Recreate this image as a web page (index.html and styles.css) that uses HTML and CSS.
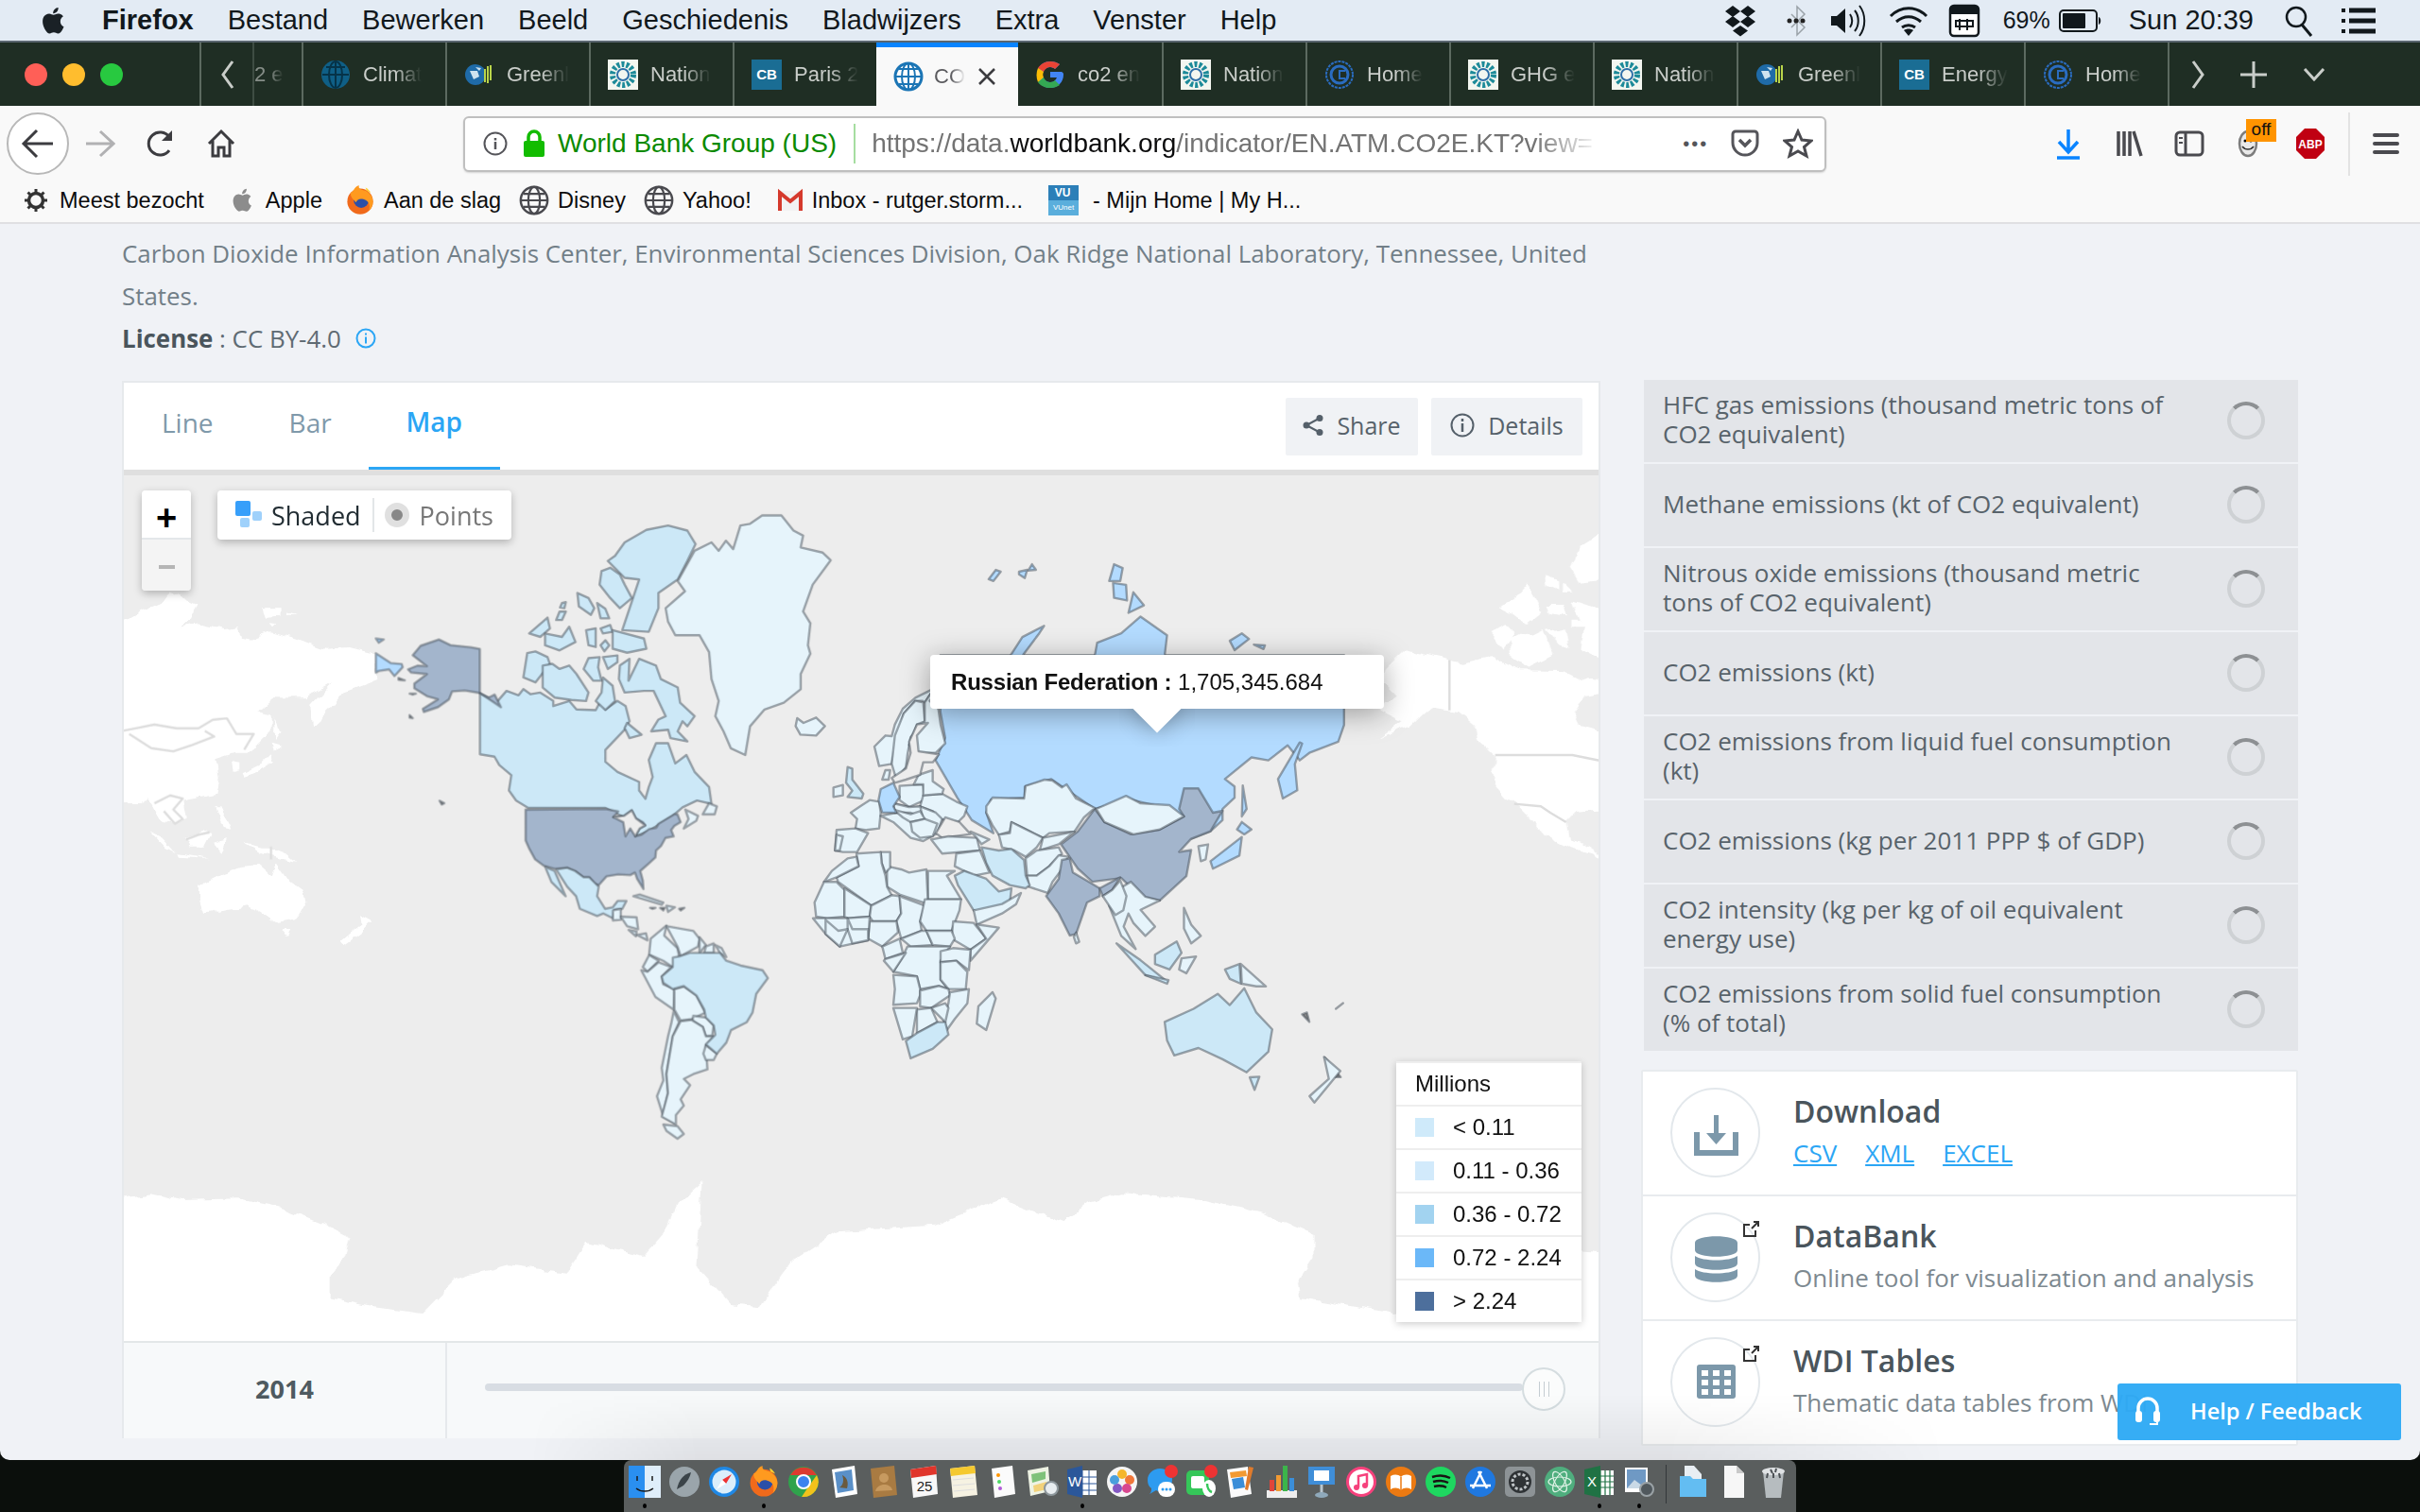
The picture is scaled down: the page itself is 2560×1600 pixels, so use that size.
FILE: index.html
```html
<!DOCTYPE html>
<html>
  <head>
    <title>CO2 emissions | Data</title>
    <meta charset="UTF-8" />
    <link rel="stylesheet" href="styles.css">
  </head>
  <body>
    <svg class="sprites" width="0" height="0">
      <defs>
        <symbol id="fav-wb" viewBox="0 0 32 32">
          <circle cx="16" cy="16" r="14" fill="#fff" stroke="#1b75b5" stroke-width="3"/>
          <path d="M16 2v28M2 16h28M6 8h20M6 24h20" stroke="#1b75b5" stroke-width="2" fill="none"/>
          <ellipse cx="16" cy="16" rx="7" ry="14" fill="none" stroke="#1b75b5" stroke-width="2"/>
        </symbol>
        <symbol id="fav-wb-dark" viewBox="0 0 32 32">
          <circle cx="16" cy="16" r="15" fill="#0f5f86"/>
          <path d="M16 2v28M2 16h28M6 8h20" stroke="#063348" stroke-width="2" fill="none"/>
          <ellipse cx="16" cy="16" rx="7" ry="14" fill="none" stroke="#063348" stroke-width="2"/>
        </symbol>
        <symbol id="fav-ghg" viewBox="0 0 32 32">
          <circle cx="12" cy="16" r="11" fill="#1f6ba8"/>
          <path d="M6 12h8l2 6-6 3zM12 8l6 1-2 3z" fill="#cfe3ef"/>
          <path d="M25 7v18M28 6v16M22 10v14" stroke="#b9d44a" stroke-width="2"/>
        </symbol>
        <symbol id="fav-noaa" viewBox="0 0 32 32">
          <rect width="32" height="32" fill="#f3f6f0"/>
          <circle cx="16" cy="16" r="11" fill="none" stroke="#1c8a99" stroke-width="6" stroke-dasharray="3 2"/>
          <circle cx="16" cy="16" r="6" fill="none" stroke="#2d6fa8" stroke-width="2"/>
        </symbol>
        <symbol id="fav-cb" viewBox="0 0 32 32">
          <rect width="32" height="32" fill="#1a6d94"/>
          <text x="16" y="21" text-anchor="middle" class="fav-cb-text">CB</text>
        </symbol>
        <symbol id="fav-g" viewBox="0 0 32 32">
          <path d="M28 13H16v6h7c-1 3-4 5-7 5-5 0-8-4-8-8s3-8 8-8c2 0 4 1 5 2l5-5c-3-2-6-3-10-3C8 2 2 8 2 16s6 14 14 14c8 0 14-6 14-14 0-1 0-2-2-3z" fill="#4285f4"/>
          <path d="M3 9l6 4c1-3 4-5 7-5 2 0 4 1 5 2l5-5c-3-2-6-3-10-3C10 2 6 5 3 9z" fill="#ea4335"/>
          <path d="M3 9l6 4c-1 2-1 4 0 6l-6 5c-2-5-2-10 0-15z" fill="#fbbc05"/>
          <path d="M3 24l6-5c1 3 4 5 7 5 2 0 4-1 5-2l5 5c-3 2-6 3-10 3-5 0-10-2-13-6z" fill="#34a853"/>
        </symbol>
        <symbol id="fav-ipcc" viewBox="0 0 32 32">
          <circle cx="16" cy="16" r="14" fill="none" stroke="#2a6cc0" stroke-width="2" stroke-dasharray="3 1"/>
          <circle cx="16" cy="16" r="9" fill="none" stroke="#2a6cc0" stroke-width="3"/>
          <path d="M22 12h-6v8h6" fill="none" stroke="#2a6cc0" stroke-width="2"/>
        </symbol>
        <symbol id="globe" viewBox="0 0 26 26">
          <circle cx="13" cy="13" r="11.500" fill="none" stroke="#4a4a4f" stroke-width="2"/>
          <ellipse cx="13" cy="13" rx="5" ry="11.500" fill="none" stroke="#4a4a4f" stroke-width="1.800"/>
          <path d="M2 13h22M4 7.500h18M4 18.500h18" stroke="#4a4a4f" stroke-width="1.800"/>
        </symbol>
        <symbol id="ext" viewBox="0 0 19 19">
          <path d="M14 11v6H2V5h6M10 9l7-7M12 2h5v5" fill="none" stroke="#333" stroke-width="2"/>
        </symbol>
        <symbol id="firefox" viewBox="0 0 26 30">
          <circle cx="13" cy="16" r="12" fill="#f06a1b"/>
          <circle cx="14" cy="15" r="7" fill="#2b4fa8"/>
          <path d="M4 8c4-2 3-6 8-7-1 3 2 4 6 5 4 2 7 6 7 10 0 4-2 7-4 9 2-5 0-10-5-11-3-1-6 0-7 3-2-3-5-4-5-9z" fill="#ff9a1f"/>
          <path d="M18 3c2 1 4 3 5 5l-4-2z" fill="#ffd22f"/>
        </symbol>
        <symbol id="apple" viewBox="0 0 16 16">
          <path d="M12.200 8.400c0-1.900 1.500-2.800 1.600-2.900-.9-1.300-2.200-1.500-2.700-1.500-1.200-.1-2.200.7-2.800.7-.6 0-1.500-.7-2.400-.7-1.300 0-2.400.7-3.100 1.800-1.300 2.300-.3 5.700 1 7.500.6.9 1.400 1.900 2.300 1.900.9 0 1.300-.6 2.400-.6 1.100 0 1.400.6 2.400.6 1 0 1.600-.9 2.200-1.800.7-1 1-2 1-2.100 0 0-1.900-.7-1.900-2.900zM10.300 2.800c.5-.6.8-1.500.7-2.300-.7 0-1.600.5-2.100 1.100-.5.5-.9 1.400-.8 2.200.8.100 1.700-.4 2.200-1z"/>
        </symbol>
      </defs>
    </svg>

    <div class="menubar">
      <svg class="apple-logo" width="30" height="32"><use href="#apple"/></svg>
      <span class="menu-app">Firefox</span>
      <span>Bestand</span>
      <span>Bewerken</span>
      <span>Beeld</span>
      <span>Geschiedenis</span>
      <span>Bladwijzers</span>
      <span>Extra</span>
      <span>Venster</span>
      <span>Help</span>
      <div class="status">
        <svg width="42" height="34" viewBox="0 0 42 34"><path d="M12 1l8 6-8 6-8-6zM28 1l8 6-8 6-8-6zM12 12l8 6-8 6-8-6zM28 12l8 6-8 6-8-6zM20 22l8 5.500-8 6-8-6z" fill="#11181c"/></svg>
        <svg width="32" height="34" viewBox="0 0 32 34"><path d="M18 2v30l8-8-14-14M18 32V2l8 8-14 14" fill="none" stroke="#9aa2a8" stroke-width="1.500"/><circle cx="10" cy="17" r="2.500" fill="#222"/><circle cx="17" cy="17" r="2.500" fill="#222"/><circle cx="24" cy="17" r="2.500" fill="#222"/></svg>
        <svg width="42" height="34" viewBox="0 0 42 34"><path d="M2 12h6l9-8v26l-9-8H2z" fill="#11181c"/><path d="M22 10c3 4 3 10 0 14M27 6c5 6 5 16 0 22M32 1c7 9 7 23 0 32" fill="none" stroke="#11181c" stroke-width="2"/></svg>
        <svg width="44" height="34" viewBox="0 0 44 34"><path d="M3 12c11-11 27-11 38 0M9 18c8-7 18-7 26 0M15 24c4-3 10-3 14 0" fill="none" stroke="#11181c" stroke-width="3"/><path d="M22 33l-5-6c3-2 7-2 10 0z" fill="#11181c"/></svg>
        <svg width="34" height="36" viewBox="0 0 34 36"><rect x="2" y="2" width="30" height="32" rx="4" fill="#fff" stroke="#11181c" stroke-width="2.500"/><path d="M2 3h30v8H2z" fill="#11181c"/><path d="M12 16v12M8 18h18v6H8zM20 16v12" stroke="#11181c" stroke-width="2" fill="none"/></svg>
        <span class="battery-pct">69%</span>
        <svg width="46" height="26" viewBox="0 0 46 26"><rect x="1" y="2" width="39" height="22" rx="4" fill="none" stroke="#11181c" stroke-width="2"/><rect x="4" y="5" width="24" height="16" rx="1" fill="#11181c"/><path d="M42 9c3 1 3 7 0 8z" fill="#11181c"/></svg>
        <span class="clock">Sun 20:39</span>
        <svg class="status-search" width="32" height="34" viewBox="0 0 32 34"><circle cx="13" cy="13" r="10" fill="none" stroke="#11181c" stroke-width="2.500"/><path d="M19 21l10 12" stroke="#11181c" stroke-width="3"/></svg>
        <svg width="38" height="28" viewBox="0 0 38 28"><path d="M9 3h28M9 14h28M9 25h28" stroke="#11181c" stroke-width="5"/><path d="M1 3h4M1 14h4M1 25h4" stroke="#11181c" stroke-width="4"/></svg>
      </div>
    </div>

    <div class="tabbar">
      <div class="traffic">
        <span class="light red"></span>
        <span class="light yellow"></span>
        <span class="light green"></span>
      </div>
      <div class="tab-arrow">
        <svg width="20" height="34" viewBox="0 0 20 34"><path d="M15 3L5 17l10 14" fill="none" stroke="#c9cdc9" stroke-width="3"/></svg>
      </div>
      <div class="tab tab-partial"><span class="tab-label">2 e</span></div>
      <div class="tab"><svg class="fav"><use href="#fav-wb-dark"/></svg><span class="tab-label">Climat</span></div>
      <div class="tab"><svg class="fav"><use href="#fav-ghg"/></svg><span class="tab-label">Greenl</span></div>
      <div class="tab"><svg class="fav"><use href="#fav-noaa"/></svg><span class="tab-label">Nation</span></div>
      <div class="tab"><svg class="fav"><use href="#fav-cb"/></svg><span class="tab-label">Paris 2</span></div>
      <div class="tab tab-active">
        <svg class="fav"><use href="#fav-wb"/></svg>
        <span class="tab-label">CO</span>
        <svg class="tab-close" width="20" height="18" viewBox="0 0 20 18"><path d="M2 1l16 16M18 1L2 17" stroke="#3c3c40" stroke-width="2.500"/></svg>
      </div>
      <div class="tab tab-after"><svg class="fav"><use href="#fav-g"/></svg><span class="tab-label">co2 en</span></div>
      <div class="tab"><svg class="fav"><use href="#fav-noaa"/></svg><span class="tab-label">Nation</span></div>
      <div class="tab"><svg class="fav"><use href="#fav-ipcc"/></svg><span class="tab-label">Home</span></div>
      <div class="tab"><svg class="fav"><use href="#fav-noaa"/></svg><span class="tab-label">GHG e</span></div>
      <div class="tab"><svg class="fav"><use href="#fav-noaa"/></svg><span class="tab-label">Nation</span></div>
      <div class="tab"><svg class="fav"><use href="#fav-ghg"/></svg><span class="tab-label">Greenl</span></div>
      <div class="tab"><svg class="fav"><use href="#fav-cb"/></svg><span class="tab-label">Energy</span></div>
      <div class="tab"><svg class="fav"><use href="#fav-ipcc"/></svg><span class="tab-label">Home</span></div>
      <div class="tab-end">
        <svg width="20" height="34" viewBox="0 0 20 34"><path d="M5 3l10 14L5 31" fill="none" stroke="#c9cdc9" stroke-width="3"/></svg>
        <svg width="30" height="30" viewBox="0 0 30 30"><path d="M15 1v28M1 15h28" stroke="#c9cdc9" stroke-width="3"/></svg>
        <svg width="24" height="14" viewBox="0 0 24 14"><path d="M2 1l10 11L22 1" fill="none" stroke="#c9cdc9" stroke-width="3"/></svg>
      </div>
    </div>

    <div class="navbar">
      <div class="back-btn">
        <svg width="36" height="32" viewBox="0 0 36 32"><path d="M34 16H4M17 2L3 16l14 14" fill="none" stroke="#3c3c40" stroke-width="3"/></svg>
      </div>
      <svg class="nav-forward" width="32" height="32" viewBox="0 0 32 32"><path d="M1 16h28M16 3l14 13-14 13" fill="none" stroke="#b1b1b3" stroke-width="3"/></svg>
      <svg class="nav-icon" width="32" height="32" viewBox="0 0 32 32"><path d="M25 23a12 12 0 1 1 0-14" fill="none" stroke="#3c3c40" stroke-width="3"/><path d="M28 2v11H17z" fill="#3c3c40"/></svg>
      <svg class="nav-icon" width="32" height="32" viewBox="0 0 32 32"><path d="M3 16L16 3l13 13M7 13v16h6v-9h6v9h6V13" fill="none" stroke="#3c3c40" stroke-width="3"/></svg>
      <div class="urlbar">
        <svg width="26" height="26" viewBox="0 0 26 26"><circle cx="13" cy="13" r="11.500" fill="none" stroke="#55555a" stroke-width="2"/><path d="M13 11v8M13 7v2.500" stroke="#55555a" stroke-width="2.500"/></svg>
        <svg class="lock" width="24" height="30" viewBox="0 0 24 30"><rect x="1" y="12" width="22" height="17" rx="2" fill="#12bc00"/><path d="M6 13V8a6 6 0 0 1 12 0v5" fill="none" stroke="#12bc00" stroke-width="3.500"/></svg>
        <span class="identity">World Bank Group (US)</span>
        <span class="url"><span class="url-dim">https://data.</span>worldbank.org<span class="url-dim">/indicator/EN.ATM.CO2E.KT?view=</span></span>
        <span class="url-dots">•••</span>
        <svg class="pocket" width="30" height="30" viewBox="0 0 30 30"><path d="M2 5a3 3 0 0 1 3-3h20a3 3 0 0 1 3 3v9a13 13 0 0 1-26 0z" fill="none" stroke="#55555a" stroke-width="3"/><path d="M9 11l6 6 6-6" fill="none" stroke="#55555a" stroke-width="3.500"/></svg>
        <svg class="star" width="32" height="32" viewBox="0 0 32 32"><path d="M16 3l4 9 10 1-7.500 6.500L25 29l-9-5-9 5 2.500-9.500L2 13l10-1z" fill="none" stroke="#4a4a4f" stroke-width="3"/></svg>
      </div>
      <div class="nav-right">
        <svg width="32" height="34" viewBox="0 0 32 34"><path d="M16 2v22M6 15l10 11 10-11" fill="none" stroke="#0a84ff" stroke-width="3.500"/><path d="M4 32h24" stroke="#0a84ff" stroke-width="3.500"/></svg>
        <svg width="32" height="32" viewBox="0 0 32 32"><path d="M5 3v26M11 3v26M17 3v26M21 3l8 26" stroke="#4a4a4f" stroke-width="3.500"/></svg>
        <svg width="32" height="32" viewBox="0 0 32 32"><rect x="2" y="4" width="28" height="24" rx="4" fill="none" stroke="#4a4a4f" stroke-width="3"/><path d="M12 5v22" stroke="#4a4a4f" stroke-width="3"/><path d="M5 10h4M5 15h4" stroke="#4a4a4f" stroke-width="2"/></svg>
        <div class="smiley">
          <svg width="26" height="30" viewBox="0 0 26 30"><ellipse cx="11" cy="15" rx="9" ry="13" fill="#e9e9e9" stroke="#7d7d7d" stroke-width="2.500"/><circle cx="8" cy="12" r="1.500"/><circle cx="14" cy="12" r="1.500"/><path d="M5 18c3 4 9 4 12 0" fill="none" stroke="#333" stroke-width="1.500"/></svg>
          <span class="badge-off">off</span>
        </div>
        <svg width="32" height="34" viewBox="0 0 32 34"><path d="M10 1h12l9 9v14l-9 9H10l-9-9V10z" fill="#c00012"/><text x="16" y="22" text-anchor="middle" class="abp-text">ABP</text></svg>
        <span class="nav-divider"></span>
        <svg width="32" height="26" viewBox="0 0 32 26"><path d="M4 4h24M4 13h24M4 22h24" stroke="#4a4a4f" stroke-width="4" stroke-linecap="round"/></svg>
      </div>
    </div>

    <div class="bookmarks">
      <div class="bm">
        <svg width="26" height="26" viewBox="0 0 26 26"><circle cx="13" cy="13" r="7.500" fill="none" stroke="#333" stroke-width="3.500"/><path d="M13 1v5M13 20v5M1 13h5M20 13h5M4.500 4.500l4 4M17.500 17.500l4 4M4.500 21.500l4-4M17.500 8.500l4-4" stroke="#333" stroke-width="3"/></svg>
        Meest bezocht
      </div>
      <div class="bm"><svg class="bm-apple" width="26" height="28"><use href="#apple"/></svg>Apple</div>
      <div class="bm bm-wide bm-fox"><svg width="32" height="34"><use href="#firefox"/></svg>Aan de slag</div>
      <div class="bm bm-wide"><svg width="32" height="32"><use href="#globe"/></svg>Disney</div>
      <div class="bm bm-wide"><svg width="32" height="32"><use href="#globe"/></svg>Yahoo!</div>
      <div class="bm bm-mail">
        <svg width="28" height="26" viewBox="0 0 28 26"><rect x="1" y="3" width="26" height="21" fill="#f2f2f2"/><path d="M3 24V5L14 14 25 5v19" fill="none" stroke="#d5392c" stroke-width="4"/></svg>
        Inbox - rutger.storm...
      </div>
      <div class="bm bm-last">
        <svg width="32" height="32" viewBox="0 0 32 32"><rect width="32" height="32" fill="#5aaedc"/><rect width="32" height="16" fill="#2c7fb8"/><text x="15" y="12" text-anchor="middle" class="vu-text">VU</text><text x="16" y="26" text-anchor="middle" class="vu-sub">VUnet</text></svg>
        - Mijn Home | My H...
      </div>
    </div>

    <div class="page">
      <p class="source">Carbon Dioxide Information Analysis Center, Environmental Sciences Division, Oak Ridge National Laboratory, Tennessee, United<br />States.</p>
      <p class="license"><b>License</b> : CC BY-4.0
        <svg width="22" height="22" viewBox="0 0 22 22"><circle cx="11" cy="11" r="9.500" fill="none" stroke="#2ba6f5" stroke-width="2"/><path d="M11 9.500v7M11 5.500v2" stroke="#2ba6f5" stroke-width="2"/></svg>
      </p>

      <div class="main">
        <div class="chart-card">
          <div class="chart-tabs">
            <a class="chart-tab tab-line">Line</a>
            <a class="chart-tab tab-bar">Bar</a>
            <a class="chart-tab tab-map">Map</a>
            <div class="chart-actions">
              <button class="act-btn act-share">
                <svg width="22" height="24" viewBox="0 0 22 24"><circle cx="4" cy="12" r="3.500" fill="#55606a"/><circle cx="18" cy="4.500" r="3.500" fill="#55606a"/><circle cx="18" cy="19.500" r="3.500" fill="#55606a"/><path d="M4 12L18 4.500M4 12l14 7.500" stroke="#55606a" stroke-width="2"/></svg>
                Share
              </button>
              <button class="act-btn act-details">
                <svg width="26" height="26" viewBox="0 0 26 26"><circle cx="13" cy="13" r="11.500" fill="none" stroke="#55606a" stroke-width="2"/><path d="M13 11v9M13 6v3" stroke="#55606a" stroke-width="2.500"/></svg>
                Details
              </button>
            </div>
          </div>

          <div class="map">
            <svg class="map-svg" viewBox="130 503 1563 916" width="1563" height="916">
              <defs>
                <filter id="coast" x="-5%" y="-5%" width="110%" height="110%">
                  <feTurbulence type="fractalNoise" baseFrequency="0.07" numOctaves="2" seed="4"/>
                  <feDisplacementMap in="SourceGraphic" scale="9" xChannelSelector="R" yChannelSelector="G"/>
                </filter>
              </defs>
              <!-- land with no data -->
              <g class="coast">
                <g transform="translate(130,560) scale(.3333)" class="blank">
                  <path d="M0,295 60,260 120,235 145,200 170,210 235,240 220,280 180,310 250,300 320,315 365,310 375,345 400,350 470,325 560,350 640,380 720,375 800,395 805,480 700,520 660,570 600,625 595,560 660,490 580,535 480,535 430,580 470,590 470,640 400,710 355,710 295,730 305,790 295,840 210,855 190,860 200,920 165,935 125,930 80,850 60,870 -20,870 -20,295Z"/>
                  <path d="M120,180 150,150 170,175 125,190Z"/>
                  <path d="M440,250 500,250 500,275 450,278Z"/>
                  <path d="M520,262 555,272 520,272Z"/>
                  <path d="M470,298 490,300 480,310Z"/>
                  <path d="M380,775 440,745 470,715 480,740 430,770 385,785Z"/>
                  <path d="M470,680 505,690 480,705Z"/>
                  <path d="M482,600 496,650 480,672Z"/>
                  <path d="M345,735 370,740 370,760 350,765Z"/>
                  <path d="M295,880 310,880 345,950 320,945Z"/>
                  <path d="M85,958 125,980 170,1030 140,1015Z"/>
                  <path d="M175,1030 280,1048 180,1040Z"/>
                  <path d="M200,980 250,960 280,970 260,1010 215,1010Z"/>
                  <path d="M285,995 330,985 310,1025Z"/>
                  <path d="M385,995 440,1010 470,1010 520,1030 550,1055 480,1040 440,1030Z"/>
                  <path d="M240,1130 310,1095 380,1070 430,1065 470,1100 485,1060 520,1110 575,1150 580,1185 550,1240 490,1250 440,1215 400,1195 330,1205 255,1220 240,1170Z"/>
                  <path d="M505,1272 535,1272 525,1290Z"/>
                  <path d="M750,1225 790,1245 760,1275 735,1295 700,1320 690,1308 735,1270 755,1255Z"/>
                </g>
                <g transform="translate(1320,500) scale(.3333)" class="blank">
                  <path d="M425,740 470,710 440,680 420,670 435,625 500,562 545,575 640,595 680,605 770,585 860,628 1000,630 1060,660 1095,650 1140,660V700L1070,710 1035,760 1055,800 1140,825V1070L1040,1080 1010,1110 1020,1165 1060,1175 1100,1200 1140,1250 1095,1210 1020,1190 950,1155 900,1100 860,1060 830,1045 790,1000 780,950 785,900 730,850 720,800 670,760 640,755 580,745 550,770 520,800 440,830 410,845 490,790 430,760Z"/>
                  <path d="M770,510 820,480 850,510 810,560Z"/>
                  <path d="M830,530 870,510 900,520 940,500 970,580 890,620 840,590Z"/>
                  <path d="M800,430 850,395 890,350 910,400 930,440 880,480 840,450Z"/>
                  <path d="M950,500 1010,490 1020,560 990,550Z"/>
                  <path d="M1030,490 1070,490 1060,560 1140,600V470L1030,470Z"/>
                  <path d="M1020,300 1060,230 1140,180V340L1050,350Z"/>
                  <path d="M945,325 985,340 985,375 950,360Z"/>
                  <path d="M1000,350 1030,380 1000,380Z"/>
                  <path d="M1030,405 1140,440V475L1055,470Z"/>
                  <path d="M950,420 1000,420 1010,460 960,450Z"/>
                </g>
                <g transform="translate(120,1100) scale(1.0204,.3333)" class="blank">
                  <path d="M-10,510 40,490 70,510 130,505 170,530 220,590 245,630 240,690 225,750 225,820 270,850 320,870 355,760 410,715 470,740 490,645 550,690 570,620 585,520 610,450 605,720 640,840 670,850 705,700 750,610 850,590 920,505 985,580 1010,520 1045,490 1130,510 1190,550 1245,620 1245,690 1228,770 1230,820 1310,860 1330,870 1520,670 1560,680V980H-10Z"/>
                </g>
              </g>
              <g transform="translate(130,560) scale(.3333)" class="blank-line">
                <path d="M0,640 50,630 100,620 170,632 240,632 285,605 330,600 360,650 415,650 385,700"/>
                <path d="M20,650 90,695 160,705 220,685 290,658 260,640"/>
                <path d="M100,870 150,845 190,855 160,890 190,920 165,935 130,895"/>
                <path d="M200,985 240,970 275,962"/>
                <path d="M470,1008V1048"/>
              </g>
              <g transform="translate(1320,500) scale(.3333)" class="blank-line">
                <path d="M640,595V755"/>
                <path d="M785,897H1030L1119,915"/>
                <path d="M845,1052 930,1060 960,1080 1010,1110"/>
              </g>

              <!-- north america and greenland -->
              <g transform="translate(120,390) scale(.5102,.3571)">
                <path class="c1" d="M760,962 795,988 815,955 840,968 850,950 865,965 885,960 912,985 912,1000 945,985 960,1010 1000,1012 1010,985 1020,1010 1045,985 1062,1000 1070,1045 1060,1070 1020,1130 1020,1165 1045,1195 1090,1225 1090,1250 1103,1275 1110,1240 1118,1210 1110,1160 1125,1110 1150,1110 1165,1170 1188,1145 1205,1195 1235,1240 1240,1290 1210,1280 1180,1300 1160,1325 1110,1370 1085,1385 1060,1330 1020,1302 860,1302 835,1280 820,1250 825,1205 800,1175 790,1150 760,1143Z"/>
                <path class="c1" d="M1040,555 1060,515 1105,478 1150,465 1190,480 1207,520 1190,570 1170,625 1130,665 1130,710 1110,780 1055,775 1075,690 1090,625 1060,620 1025,570Z"/>
                <path class="c1" d="M1030,590 1050,610 1060,640 1075,680 1050,710 1030,680 1008,640 1012,600Z"/>
                <path class="c1" d="M962,665 985,680 997,710 990,730 965,705Z"/>
                <path class="c1" d="M1003,695 1020,712 1028,740 1010,740Z"/>
                <path class="c1" d="M925,720 938,720 930,745 918,745Z"/>
                <path class="c1" d="M930,695 938,692 935,710 926,708Z"/>
                <path class="c1" d="M900,738 905,770 885,795 862,785Z"/>
                <path class="c1" d="M895,785 930,795 945,765 958,810 925,835 895,820Z"/>
                <path class="c1" d="M980,775 1000,770 1000,825 985,820Z"/>
                <path class="c1" d="M1010,770 1030,760 1035,780 1015,785Z"/>
                <path class="c1" d="M1035,775 1100,800 1105,830 1065,842 1035,830Z"/>
                <path class="c1" d="M1020,805 1028,820 1018,838 1010,820Z"/>
                <path class="c1" d="M858,843 875,838 900,855 905,875 875,930 850,915Z"/>
                <path class="c1" d="M890,880 910,875 925,890 945,880 960,905 985,960 980,985 950,982 915,975 890,945Z"/>
                <path class="c1" d="M985,858 1008,855 1005,885 1012,925 995,925 975,890Z"/>
                <path class="c1" d="M1015,855 1045,850 1045,870 1025,890Z"/>
                <path class="c1" d="M1050,880 1070,860 1068,925 1090,860 1125,880 1135,920 1170,945 1175,990 1205,1030 1190,1060 1180,1045 1170,1075 1190,1105 1155,1095 1150,1070 1115,1075 1130,1040 1145,1030 1120,955 1100,955 1060,960 1048,920Z"/>
                <path class="c1" d="M1015,915 1035,940 1040,985 1020,1012 1000,985 1012,960Z"/>
                <path class="c1" d="M1065,1050 1095,1085 1070,1095 1060,1065Z"/>
                <path class="c0" d="M1345,435 1385,435 1410,480 1430,495 1425,530 1470,545 1487,568 1450,640 1430,720 1445,755 1440,820 1445,845 1425,905 1425,950 1390,990 1350,1010 1320,1060 1310,1145 1280,1125 1265,1075 1248,1030 1255,985 1240,920 1235,840 1215,790 1165,790 1150,750 1145,710 1185,660 1170,630 1205,540 1240,515 1255,540 1270,510 1285,535 1300,465 1320,460Z"/>
              </g>
              <g transform="translate(130,560) scale(.3333)">
                <path class="c3" d="M1003,350 1040,368 1105,375 1133,380V520L1085,512 1045,515 1035,540 1000,565 955,580 952,570 1000,540 965,530 925,505 925,490 965,460 915,455 905,445 935,433 965,435 920,400 945,370Z"/>
                <path class="c2" d="M803,394 850,425 885,428 888,438 862,466 845,445 812,450 803,455Z"/>
                <path class="c2" d="M803,347 828,350 812,360Z"/>
                <path class="c3" d="M1133,520 1160,535 1180,525 1200,565 1170,545Z"/>
                <path class="dot" d="M875,472 895,480 875,478Z"/>
                <path class="dot" d="M910,522 930,522 920,525Z"/>
                <path class="dot" d="M910,590 920,600 910,598Z"/>
                <path class="dot" d="M1005,862 1020,870 1012,874Z"/>
              </g>
              <g transform="translate(520,820) scale(.3333)">
                <path class="c3" d="M108,110 362,108 402,116 386,134 420,130 445,112 458,138 480,150 488,160 470,170 456,195 476,190 500,172 522,168 530,155 580,125 590,125 600,150 580,162 570,175 578,195 552,200 538,225 522,240 520,262 498,282 472,305 480,335 482,362 462,330 455,310 440,318 402,316 365,322 340,350 325,345 310,325 292,325 265,305 240,295 200,298 165,288 138,268 120,235 108,208Z"/>
                <path class="lake" d="M386,134 420,130 445,112 458,138 488,160 470,170 456,195 440,170 425,195 418,150Z"/>
                <path class="c1" d="M205,300 240,295 265,305 292,325 310,325 340,355 335,385 360,425 385,420 400,400 428,400 415,425 390,428 385,455 355,440 335,448 280,425 268,385 240,355Z"/>
                <path class="c1" d="M170,292 200,305 235,385 190,340Z"/>
                <path class="c0" d="M690,90 715,100 708,125 670,125Z"/>
                <path class="c0" d="M615,110 655,130 650,145 610,170 625,140Z"/>
                <path class="c0" d="M385,430 410,425 410,460 385,462Z"/>
                <path class="c0" d="M410,450 460,452 465,490 430,480Z"/>
                <path class="c0" d="M435,492 460,497 458,512Z"/>
                <path class="c0" d="M462,508 490,503 495,525Z"/>
                <path class="c0" d="M450,385 470,380 545,405 540,412Z"/>
                <path class="c0" d="M555,415 582,420 560,435Z"/>
                <path class="dot" d="M503,422 520,422 510,425Z"/>
                <path class="dot" d="M535,422 550,422 545,430Z"/>
                <path class="dot" d="M595,425 612,422 600,430Z"/>
                <path class="c0" d="M505,520 555,478 548,510 590,550 595,575 575,610 545,590 500,570Z"/>
                <path class="c0" d="M555,480 640,495 660,520 655,545 600,575 590,545Z"/>
                <path class="c0" d="M660,515 680,540 660,565Z"/>
                <path class="c0" d="M680,545 705,535 705,565 675,565Z"/>
                <path class="c0" d="M710,540 730,550 745,578 725,565Z"/>
                <path class="c0" d="M500,572 530,590 495,625 480,610Z"/>
                <path class="c0" d="M475,620 495,625 530,595 570,610 540,640 545,665 580,680 578,745 520,705Z"/>
                <path class="c0" d="M580,680 610,672 650,700 678,755 635,775 600,780 580,745Z"/>
                <path class="c0" d="M640,765 680,770 705,795 700,828 680,830 670,800 638,780Z"/>
                <path class="c0" d="M578,750 595,785 575,830 555,950 560,1010 545,1070 580,1105 545,1085 525,1020 545,970 540,930 560,830 570,790Z"/>
                <path class="c0" d="M600,782 635,778 670,800 680,830 705,830 680,860 685,935 640,950 610,965 630,985 600,1030 610,1050 585,1080 585,1110 540,1085 560,1010 555,950 575,830Z"/>
                <path class="c0" d="M680,858 715,885 705,905 680,905 672,885Z"/>
                <path class="c0" d="M545,1110 590,1115 610,1140 590,1155 555,1130Z"/>
                <path class="c1" d="M575,580 600,575 630,565 660,565 725,565 745,590 790,605 860,620 877,645 840,695 828,755 810,785 760,810 745,850 715,885 680,855 710,825 705,795 680,770 675,745 650,700 610,670 575,680 545,660 540,640 575,610Z"/>
              </g>

              <!-- russia, china and their neighbours -->
              <g transform="translate(880,520) scale(.5102,.3953)">
                <path class="c2" d="M225,438H1062V625L1050,670 990,700 970,720 945,680 905,720 870,712 815,770 835,790 835,820 810,850 810,880 785,910 745,930 700,850 620,825 545,850 455,770 400,790 400,820 330,825 320,860 335,915 290,880 260,820 215,720 235,660 225,590Z"/>
                <path class="c2" d="M370,440 395,390 440,360 430,380 395,440Z"/>
                <path class="c2" d="M545,440 550,405 600,380 640,335 695,385 690,440Z"/>
                <path class="c2" d="M825,400 850,380 865,395 835,425Z"/>
                <path class="c2" d="M875,410 898,412 895,422Z"/>
                <path class="c2" d="M340,210 350,215 335,240 325,235Z"/>
                <path class="c2" d="M388,215 405,210 400,232 388,222Z"/>
                <path class="c2" d="M415,195 423,210 407,212Z"/>
                <path class="c2" d="M585,195 603,205 598,240 575,240Z"/>
                <path class="c2" d="M583,245 610,250 612,292 585,285Z"/>
                <path class="c2" d="M625,270 647,305 615,325Z"/>
                <path class="c2" d="M925,770 970,672 975,675 960,730 965,800 935,822Z"/>
                <path class="c2" d="M852,787 860,850 850,870Z"/>
                <path class="c2" d="M850,885 870,905 855,918 840,905Z"/>
                <path class="c2" d="M785,990 850,925 845,975 790,1010Z"/>
                <path class="c0" d="M760,950 780,945 775,985 765,990Z"/>
                <path class="c3" d="M475,945 510,910 545,850 565,885 620,918 680,905 730,870 720,850 730,795 760,795 790,860 810,855 785,910 745,930 720,965 745,960 735,1030 680,1095 640,1085 600,1035 540,1045 510,1010Z"/>
                <path class="c0" d="M548,850 610,815 640,835 700,840 730,870 680,905 625,918 565,885Z"/>
                <path class="c0" d="M580,1075 620,1045 650,1085 680,1095 640,1120 670,1165 650,1190 625,1155 615,1130 605,1165 630,1225 600,1190 575,1110Z"/>
                <path class="c1" d="M590,1210 640,1255 695,1312 650,1295Z"/>
                <path class="c1" d="M650,1295 698,1308 695,1318Z"/>
                <path class="c1" d="M670,1240 715,1205 725,1235 700,1280 670,1265Z"/>
                <path class="c0" d="M725,1250 755,1245 735,1290 720,1280Z"/>
                <path class="c0" d="M730,1115 745,1160 765,1190 745,1210 730,1170Z"/>
                <path class="c1" d="M815,1280 845,1265 848,1318 825,1305Z"/>
                <path class="c0" d="M848,1265 900,1325 880,1325 850,1318Z"/>
                <path class="c1" d="M690,1420 750,1385 800,1345 825,1375 855,1330 880,1395 913,1440 905,1500 860,1555 810,1520 760,1490 710,1510 695,1470Z"/>
                <path class="dot" d="M1022,1515 1055,1568 1040,1568Z"/>
                <path class="dot" d="M975,1400 990,1420 985,1395Z"/>
                <path class="dot" d="M1045,1385 1060,1370 1050,1380Z"/>
              </g>

              <!-- europe, africa, middle east -->
              <g transform="translate(830,700) scale(.3333)">
                <path class="c0" d="M40,180 60,195 100,178 128,205 100,235 50,232 35,205Z"/>
                <path class="c1" d="M200,335 215,340 215,375 250,420 245,435 200,430 215,410 195,385Z"/>
                <path class="c0" d="M155,400 185,392 185,425 155,430Z"/>
                <path class="c0" d="M285,270 320,235 340,237 350,200 375,150 415,115 475,85 445,130 438,125 415,125 378,165 358,240 340,325 300,332Z"/>
                <path class="c0" d="M340,325 350,235 378,165 415,125 440,130 445,190 400,240 390,295 385,335 355,375Z"/>
                <path class="c0" d="M445,190 445,130 475,85 480,100 460,125 488,150 495,200 510,260 480,290 430,290 395,265 420,200Z"/>
                <path class="c0" d="M320,345 335,345 330,375 310,375Z"/>
                <path class="c0" d="M210,480 240,460 270,440 300,445 305,480 300,530 260,535 225,530 230,500Z"/>
                <path class="c0" d="M165,535 225,530 265,545 230,605 185,605 160,600Z"/>
                <path class="c0" d="M165,550 185,555 175,600 160,600Z"/>
                <path class="c0" d="M365,395 440,390 445,440 395,462 365,440Z"/>
                <path class="c0" d="M440,425 500,420 545,445 580,460 570,490 550,510 490,500 470,475 430,460Z"/>
                <path class="c0" d="M425,360 470,345 470,380 505,405 500,420 440,425 440,390 410,390Z"/>
                <path class="c0" d="M345,450 400,465 430,460 480,480 500,500 485,545 440,570 400,560 345,510 305,490 355,480Z"/>
                <path class="blank-fill" d="M345,450 395,462 430,460 440,500 400,480 350,480Z"/>
                <path class="c0" d="M345,470 400,485 430,475 445,500 400,510 375,495Z"/>
                <path class="c0" d="M400,510 445,500 485,515 470,555 430,560 405,540Z"/>
                <path class="lake" d="M480,545 510,495 555,510 590,548 500,560Z"/>
                <path class="c0" d="M465,565 520,555 610,560 620,600 500,610Z"/>
                <path class="c0" d="M590,540 650,565 625,580 610,560Z"/>
                <path class="c0" d="M640,460 660,432 760,435 765,395 825,375 850,378 880,400 895,390 925,435 985,465 950,495 920,540 840,545 820,560 760,530 720,510 715,540 680,550 660,520 640,480Z"/>
                <path class="c0" d="M680,550 715,545 720,510 760,530 820,560 800,590 765,620 730,600 690,590Z"/>
                <path class="c0" d="M820,560 920,540 870,580 810,600Z"/>
                <path class="c0" d="M765,625 800,600 870,590 880,610 840,650 800,680 770,680Z"/>
                <path class="c0" d="M770,680 800,680 840,650 870,615 900,620 880,660 850,700 835,735 775,715Z"/>
                <path class="c1" d="M625,590 680,600 720,595 760,630 765,680 778,710 765,720 715,710 660,680 640,640Z"/>
                <path class="c0" d="M540,650 545,610 620,600 650,670 600,680Z"/>
                <path class="c1" d="M540,680 570,665 640,690 680,730 720,720 715,765 640,800 600,790 550,710Z"/>
                <path class="c0" d="M600,790 690,770 750,735 735,770 690,800 610,835Z"/>
                <path class="c0" d="M455,665 540,665 515,680 560,755 455,755Z"/>
                <path class="c0" d="M325,650 370,660 395,670 450,660 455,770 365,740 325,715Z"/>
                <path class="c0" d="M305,605 335,605 335,655 320,670 308,640Z"/>
                <path class="c0" d="M228,610 305,605 308,640 320,680 325,715 340,742 275,775 170,700 165,685 235,650Z"/>
                <path class="c0" d="M200,625 228,620 235,650 165,685 125,700 150,665Z"/>
                <path class="c0" d="M95,765 125,700 165,700 190,725 190,810 135,815 100,810Z"/>
                <path class="c0" d="M190,720 275,775 270,810 200,815 190,810Z"/>
                <path class="c0" d="M275,775 340,742 365,745 370,800 355,825 280,825 270,810Z"/>
                <path class="c0" d="M365,745 445,775 430,825 435,855 370,880 355,825 370,800Z"/>
                <path class="c0" d="M445,755 560,755 555,790 530,855 450,855 430,825Z"/>
                <path class="c0" d="M535,825 600,830 640,880 590,915 530,880Z"/>
                <path class="c0" d="M610,835 680,845 590,950 590,915 640,880Z"/>
                <path class="c0" d="M270,825 355,825 360,860 310,905 265,880Z"/>
                <path class="c0" d="M90,815 135,815 200,815 270,810 265,885 175,905 130,865Z"/>
                <path class="c0" d="M200,815 215,850 265,850 265,885 215,895 200,850Z"/>
                <path class="c0" d="M130,820 170,855 200,850 175,905 130,865Z"/>
                <path class="c0" d="M370,880 435,855 450,855 470,900 400,905Z"/>
                <path class="c0" d="M450,855 530,855 540,880 525,905 470,900Z"/>
                <path class="c0" d="M390,905 470,905 525,905 495,950 495,1010 520,1040 490,1030 430,1040 420,1000 345,985 370,945Z"/>
                <path class="c0" d="M310,905 365,880 375,925 320,945Z"/>
                <path class="c0" d="M320,945 385,925 345,985 315,950Z"/>
                <path class="c0" d="M495,920 535,910 590,915 585,980 545,950 495,955Z"/>
                <path class="c0" d="M495,955 545,950 580,985 575,1040 520,1040 495,1010Z"/>
                <path class="c0" d="M345,995 420,1000 430,1040 430,1060 420,1085 345,1090 350,1040Z"/>
                <path class="c0" d="M430,1045 490,1030 520,1040 525,1060 465,1100 430,1095Z"/>
                <path class="c0" d="M525,1050 585,1040 580,1085 540,1135 515,1170 505,1140 520,1085Z"/>
                <path class="c0" d="M465,1100 510,1085 520,1100 510,1145Z"/>
                <path class="c0" d="M420,1105 465,1100 485,1145 420,1180Z"/>
                <path class="c0" d="M345,1100 420,1100 405,1190 375,1200Z"/>
                <path class="c1" d="M385,1205 420,1180 485,1145 510,1145 520,1185 470,1230 400,1260Z"/>
                <path class="c0" d="M660,1050 670,1070 640,1170 610,1150 615,1095Z"/>
                <path class="c2" d="M305,405 345,385 365,430 345,460 355,480 310,480 298,440Z"/>
                <path class="lake" d="M420,200 455,195 420,235 425,285 490,295 470,320 440,320 430,360 385,375 350,385 340,370 385,340 400,290 395,255Z"/>
                <path class="c3" d="M830,745 870,690 880,630 905,625 915,670 975,705 1000,720 1000,745 960,765 925,865 905,870 870,800Z"/>
                <path class="c3" d="M1000,720 1065,685 1040,725 1010,745Z"/>
                <path class="c0" d="M1010,745 1040,725 1065,695 1085,745 1075,790 1050,805Z"/>
                <path class="c0" d="M925,860 935,890 925,895 918,875Z"/>
              </g>
              <g transform="translate(120,1100) scale(1.0204,.3333)">
                <path class="c1" d="M1178,120 1188,118 1183,160Z"/>
                <path class="c0" d="M1255,55 1272,100 1245,200 1240,180 1260,125Z"/>
              </g>
            </svg>

            <div class="zoom-ctl">
              <div class="zoom-in">+</div>
              <div class="zoom-out"><span></span></div>
            </div>

            <div class="mode-ctl">
              <svg width="30" height="30" viewBox="0 0 30 30"><rect x="0" y="0" width="16" height="16" rx="2" fill="#379ffa"/><rect x="18" y="11" width="10" height="10" rx="2" fill="#9fd1fb"/><rect x="5" y="18" width="10" height="10" rx="2" fill="#9fd1fb"/></svg>
              <span class="mode-on">Shaded</span>
              <span class="mode-sep"></span>
              <span class="mode-dot"></span>
              <span class="mode-off">Points</span>
            </div>

            <div class="map-tip">
              <b>Russian Federation :</b> 1,705,345.684
              <div class="tip-caret"></div>
            </div>

            <div class="legend">
              <div class="legend-head">Millions</div>
              <div class="legend-row"><span class="swatch s1"></span>&lt; 0.11</div>
              <div class="legend-row"><span class="swatch s2"></span>0.11 - 0.36</div>
              <div class="legend-row"><span class="swatch s3"></span>0.36 - 0.72</div>
              <div class="legend-row"><span class="swatch s4"></span>0.72 - 2.24</div>
              <div class="legend-row"><span class="swatch s5"></span>&gt; 2.24</div>
            </div>
          </div>

          <div class="timeline">
            <div class="year">2014</div>
            <div class="slider">
              <div class="track"></div>
              <div class="handle"><span></span></div>
            </div>
          </div>
        </div>

        <div class="side">
          <ul class="related">
            <li>HFC gas emissions (thousand metric tons of CO2 equivalent)<span class="spin"></span></li>
            <li>Methane emissions (kt of CO2 equivalent)<span class="spin"></span></li>
            <li>Nitrous oxide emissions (thousand metric tons of CO2 equivalent)<span class="spin"></span></li>
            <li>CO2 emissions (kt)<span class="spin"></span></li>
            <li>CO2 emissions from liquid fuel consumption (kt)<span class="spin"></span></li>
            <li>CO2 emissions (kg per 2011 PPP $ of GDP)<span class="spin"></span></li>
            <li>CO2 intensity (kg per kg of oil equivalent energy use)<span class="spin"></span></li>
            <li>CO2 emissions from solid fuel consumption (% of total)<span class="spin"></span></li>
          </ul>

          <div class="tools">
            <div class="tool">
              <div class="tool-icon">
                <svg width="93" height="93" viewBox="0 0 93 93"><path d="M26 45v22h41V45" fill="none" stroke="#7c98aa" stroke-width="6"/><path d="M46.500 27v22" stroke="#7c98aa" stroke-width="5"/><path d="M36 46h21L46.500 58z" fill="#7c98aa"/></svg>
              </div>
              <div>
                <h3>Download</h3>
                <p><a>CSV</a><a>XML</a><a>EXCEL</a></p>
              </div>
            </div>
            <div class="tool">
              <div class="tool-icon">
                <svg width="93" height="93" viewBox="0 0 93 93"><path d="M24 30c0-9 45-9 45 0v8c0 9-45 9-45 0zM24 44c8 6 37 6 45 0v8c0 9-45 9-45 0zM24 58c8 6 37 6 45 0v7c0 9-45 9-45 0z" fill="#7c98aa"/></svg>
                <svg class="tool-ext"><use href="#ext"/></svg>
              </div>
              <div>
                <h3>DataBank</h3>
                <p>Online tool for visualization and analysis</p>
              </div>
            </div>
            <div class="tool">
              <div class="tool-icon">
                <svg width="93" height="93" viewBox="0 0 93 93"><rect x="26" y="27" width="41" height="36" rx="3" fill="#7c98aa"/><path d="M31 33h7v6h-7zM43 33h7v6h-7zM55 33h7v6h-7zM31 43h7v6h-7zM43 43h7v6h-7zM55 43h7v6h-7zM31 53h7v6h-7zM43 53h7v6h-7zM55 53h7v6h-7z" fill="#fff"/></svg>
                <svg class="tool-ext"><use href="#ext"/></svg>
              </div>
              <div>
                <h3>WDI Tables</h3>
                <p>Thematic data tables from WDI</p>
              </div>
            </div>
          </div>
        </div>
      </div>

      <div class="dock-glow"></div>
      <div class="help">
        <svg width="28" height="32" viewBox="0 0 28 32"><path d="M4 18v-5a10 10 0 0 1 20 0v5" fill="none" stroke="#fff" stroke-width="3.500"/><rect x="1" y="16" width="7" height="12" rx="3" fill="#fff"/><rect x="20" y="16" width="7" height="12" rx="3" fill="#fff"/><path d="M24 28v2h-8" fill="none" stroke="#fff" stroke-width="2"/></svg>
        Help / Feedback
      </div>
    </div>

    <div class="desktop">
      <div class="dock">
        <div class="dock-item running"><svg viewBox="0 0 34 36"><rect width="17" height="34" y="1" fill="#2a8ff0"/><rect x="17" y="1" width="17" height="34" fill="#dfeefa"/><path d="M9 12v5M25 12v5M8 25c5 4 13 4 18 0" stroke="#1a1a1a" stroke-width="1.500" fill="none"/></svg></div>
        <div class="dock-item"><svg viewBox="0 0 34 36"><circle cx="17" cy="18" r="16" fill="#9aa5ab"/><path d="M24 8c-8 2-13 8-15 18l7-4c4-4 7-9 8-14z" fill="#3b4449"/></svg></div>
        <div class="dock-item"><svg viewBox="0 0 34 36"><circle cx="17" cy="18" r="16" fill="#1f88e5"/><circle cx="17" cy="18" r="12.500" fill="#dbeefb"/><path d="M25 10l-10 6 4 4z" fill="#e33"/><path d="M9 26l6-10 4 4z" fill="#fff"/></svg></div>
        <div class="dock-item running"><svg viewBox="0 0 26 30"><use href="#firefox"/></svg></div>
        <div class="dock-item"><svg viewBox="0 0 34 36"><circle cx="17" cy="18" r="16" fill="#2fa34c"/><path d="M3 11a16 16 0 0 1 28 0H17z" fill="#dc3b30"/><path d="M31 11a16 16 0 0 1-16 23l8-12z" fill="#f2c21b"/><circle cx="17" cy="18" r="7" fill="#3d83ee" stroke="#fff" stroke-width="2"/></svg></div>
        <div class="dock-item"><svg viewBox="0 0 34 36"><path d="M4 5l24-4 3 30-23 4z" fill="#fff"/><path d="M7 8l18-3 2 22-17 3z" fill="#5a90c8"/><path d="M12 24c4-2 5-8 3-13 5 2 7 8 5 14z" fill="#6b5a3d"/></svg></div>
        <div class="dock-item"><svg viewBox="0 0 34 36"><path d="M3 4l25-3 3 31-25 3z" fill="#a97b42"/><circle cx="17" cy="14" r="5" fill="#c79a60"/><path d="M8 28c2-9 16-9 18-1z" fill="#c79a60"/></svg></div>
        <div class="dock-item"><svg viewBox="0 0 34 36"><path d="M3 5l27-4 2 30-26 4z" fill="#f8f8f8"/><path d="M3 5l27-4 1 9-27 4z" fill="#e0352b"/><text x="18" y="28" text-anchor="middle" class="dock-cal">25</text></svg></div>
        <div class="dock-item"><svg viewBox="0 0 34 36"><path d="M3 4l26-3 3 31-26 3z" fill="#f6f2e2"/><path d="M3 4l26-3 1 8-26 3z" fill="#f5c92f"/><path d="M6 16l22-2M6 22l23-2M7 28l22-2" stroke="#ddd" stroke-width="1"/></svg></div>
        <div class="dock-item"><svg viewBox="0 0 34 36"><path d="M5 4l22-3 3 30-22 4z" fill="#fbfbfb"/><circle cx="12" cy="11" r="2" fill="#ff9500"/><circle cx="13" cy="18" r="2" fill="#4cd964"/><circle cx="14" cy="25" r="2" fill="#b05bd6"/></svg></div>
        <div class="dock-item"><svg viewBox="0 0 34 36"><path d="M1 6l22-4 2 26-21 5z" fill="#eef3e4"/><path d="M5 10l15-3v8L6 19z" fill="#7fc27a"/><path d="M7 22l14-4 1 8-14 3z" fill="#f2d27a"/><circle cx="26" cy="25" r="7" fill="#e8edf0" stroke="#8d979c" stroke-width="2"/></svg></div>
        <div class="dock-item running"><svg viewBox="0 0 34 36"><path d="M12 6h20v26H12z" fill="#fff"/><path d="M17 6v26M24 6v26M12 13h20M12 20h20M12 27h20" stroke="#2b579a" stroke-width="1"/><path d="M1 5l16-4v34L1 31z" fill="#2b579a"/><text x="9" y="23" text-anchor="middle" class="dock-w">W</text></svg></div>
        <div class="dock-item"><svg viewBox="0 0 34 36"><circle cx="17" cy="18" r="16" fill="#f5f5f5"/><circle cx="17" cy="10" r="5" fill="#f5b62c"/><circle cx="25" cy="16" r="5" fill="#f0773a"/><circle cx="22" cy="25" r="5" fill="#d8478f"/><circle cx="12" cy="25" r="5" fill="#8459c4"/><circle cx="9" cy="16" r="5" fill="#4aa0dc"/></svg></div>
        <div class="dock-item"><svg viewBox="0 0 34 36"><path d="M15 4c8 0 13 5 13 12s-6 12-13 12c-1 0-3 0-4-1l-7 4c2-2 2-4 2-6-3-2-4-5-4-9C2 9 8 4 15 4z" fill="#2d9bf0"/><rect x="13" y="18" width="18" height="16" rx="8" fill="#fff"/><circle cx="18" cy="26" r="1.500" fill="#2d9bf0"/><circle cx="22" cy="26" r="1.500" fill="#2d9bf0"/><circle cx="26" cy="26" r="1.500" fill="#2d9bf0"/><circle cx="27" cy="7" r="7" fill="#e33"/></svg></div>
        <div class="dock-item"><svg viewBox="0 0 34 36"><rect x="1" y="6" width="24" height="26" rx="5" fill="#35c759"/><rect x="6" y="12" width="14" height="13" rx="2" fill="#fff"/><ellipse cx="25" cy="25" rx="7" ry="9" fill="#fff"/><path d="M23 20c0 4 2 8 5 9" stroke="#35c759" stroke-width="2.500" fill="none"/><circle cx="27" cy="7" r="7" fill="#e33"/></svg></div>
        <div class="dock-item"><svg viewBox="0 0 34 36"><path d="M2 5l22-3 4 29-22 4z" fill="#fbfbfb"/><path d="M5 8l17-2 1 6-17 2z" fill="#f29a32"/><path d="M7 15l12-2 2 11-12 2z" fill="#3b8ed8"/><path d="M25 2l5 1-6 24-3-1z" fill="#e07b2b"/></svg></div>
        <div class="dock-item"><svg viewBox="0 0 34 36"><rect x="1" y="27" width="32" height="8" fill="#eee"/><rect x="4" y="16" width="5" height="12" fill="#e0453a"/><rect x="11" y="11" width="5" height="17" fill="#f29a32"/><rect x="18" y="1" width="5" height="27" fill="#3cb54a"/><rect x="25" y="14" width="5" height="14" fill="#3b8ed8"/></svg></div>
        <div class="dock-item"><svg viewBox="0 0 34 36"><rect x="3" y="2" width="28" height="19" fill="#3f8ed8"/><rect x="9" y="6" width="16" height="11" fill="#fff"/><path d="M17 21v11" stroke="#b9c6cf" stroke-width="3"/><ellipse cx="17" cy="32" rx="7" ry="3" fill="#8fa9bb"/></svg></div>
        <div class="dock-item"><svg viewBox="0 0 34 36"><circle cx="17" cy="18" r="16" fill="#f6417c"/><circle cx="17" cy="18" r="13" fill="#fff"/><path d="M14 24V12l9-2v12" fill="none" stroke="#f6417c" stroke-width="2.500"/><circle cx="12" cy="24" r="3" fill="#f6417c"/><circle cx="21" cy="22" r="3" fill="#f6417c"/></svg></div>
        <div class="dock-item"><svg viewBox="0 0 34 36"><circle cx="17" cy="18" r="16" fill="#ec7a12"/><path d="M6 12c4-2 8-2 11 1 3-3 7-3 11-1v14c-4-2-8-2-11 1-3-3-7-3-11-1z" fill="#fff"/><path d="M17 13v14" stroke="#ec7a12" stroke-width="1.500"/></svg></div>
        <div class="dock-item"><svg viewBox="0 0 34 36"><circle cx="17" cy="18" r="16" fill="#1ed760"/><path d="M8 13c6-2 13-2 19 1M9 18c5-1.500 11-1.500 16 1M10 23c4-1 9-1 13 1" fill="none" stroke="#191414" stroke-width="2.500"/></svg></div>
        <div class="dock-item"><svg viewBox="0 0 34 36"><circle cx="17" cy="18" r="16" fill="#1f78e0"/><path d="M18 7L9 25M15 7l9 18M6 22h22" stroke="#fff" stroke-width="2.500"/></svg></div>
        <div class="dock-item"><svg viewBox="0 0 34 36"><rect x="1" y="2" width="32" height="32" rx="5" fill="#8d9396"/><circle cx="17" cy="18" r="12" fill="#2f3336"/><circle cx="17" cy="18" r="8" fill="none" stroke="#bfc4c7" stroke-width="3" stroke-dasharray="3 2"/></svg></div>
        <div class="dock-item"><svg viewBox="0 0 34 36"><circle cx="17" cy="18" r="16" fill="#4fae7e"/><g fill="none" stroke="#dff2e6" stroke-width="1.200"><ellipse cx="17" cy="18" rx="12" ry="5"/><ellipse cx="17" cy="18" rx="12" ry="5" transform="rotate(60 17 18)"/><ellipse cx="17" cy="18" rx="12" ry="5" transform="rotate(120 17 18)"/></g></svg></div>
        <div class="dock-item running"><svg viewBox="0 0 34 36"><rect x="14" y="6" width="18" height="26" fill="#fff"/><path d="M18 6v26M23 6v26M28 6v26M14 12h18M14 18h18M14 24h18" stroke="#1f7244" stroke-width="1.200"/><path d="M1 5l17-4v34L1 31z" fill="#1f7244"/><text x="9" y="23" text-anchor="middle" class="dock-w">X</text></svg></div>
        <div class="dock-item running"><svg viewBox="0 0 34 36"><path d="M2 3h24v26H2z" fill="#fff"/><path d="M4 5h20v20H4z" fill="#6f99c4"/><path d="M4 25l8-9 12 9z" fill="#c9d9e6"/><circle cx="25" cy="26" r="7" fill="#50585d" stroke="#9aa2a6" stroke-width="2"/></svg></div>
        <span class="dock-sep"></span>
        <div class="dock-item"><svg viewBox="0 0 34 36"><path d="M8 1h10l8 9v24H8z" fill="#e8eef3"/><path d="M3 12h11l3 3h14v19H3z" fill="#63bdf2"/></svg></div>
        <div class="dock-item"><svg viewBox="0 0 34 36"><path d="M7 1h13l8 8v26H7z" fill="#f7f7f7"/><path d="M20 1l8 8h-8z" fill="#c9c9c9"/></svg></div>
        <div class="dock-item"><svg viewBox="0 0 34 36"><path d="M6 7h22l-3 28H9z" fill="#b6bcbf"/><ellipse cx="17" cy="7" rx="12" ry="4" fill="#dfe2e4"/><path d="M11 9l-1 5M17 9v5M23 9l1 5M14 5l2 4M20 4l-1 4" stroke="#4d5256" stroke-width="2"/></svg></div>
      </div>
    </div>
  </body>
</html>
```

FILE: styles.css
```css
* {
  box-sizing: border-box;
}

html,
body {
  margin: 0;
  width: 2560px;
  height: 1600px;
  overflow: hidden;
}

body {
  background-color: #0b0f0c;
  font-family: "Liberation Sans", sans-serif;
  color: #11181c;
}

.sprites {
  position: absolute;
}

/* mac menu bar */
.menubar {
  display: flex;
  align-items: center;
  height: 45px;
  padding-left: 41px;
  gap: 36px;
  background-color: #e3ebf4;
  border-bottom: 2px solid #5a6670;
  font-size: 29px;
  white-space: nowrap;
}

.apple-logo {
  fill: #1a2126;
  margin-right: 1px;
}

.menu-app {
  font-weight: bold;
}

.status {
  display: flex;
  align-items: center;
  gap: 20px;
  margin-left: auto;
  padding-right: 46px;
}

.battery-pct {
  margin: 0 -11px 0 4px;
  font-size: 25px;
}

.clock {
  margin-left: 8px;
}

.status-search {
  margin-left: 12px;
  margin-right: 8px;
}

/* tab strip */
.tabbar {
  display: flex;
  height: 67px;
  background-color: #1f2e24;
  font-size: 22px;
  color: #c9cdc9;
}

.traffic {
  display: flex;
  align-items: center;
  gap: 16px;
  width: 211px;
  padding-left: 26px;
}

.light {
  width: 24px;
  height: 24px;
  border-radius: 50%;
}

.red {
  background-color: #ff5f57;
}

.yellow {
  background-color: #ffbd2e;
}

.green {
  background-color: #28c940;
}

.tab-arrow {
  display: flex;
  align-items: center;
  width: 56px;
  padding-left: 18px;
  border-left: 2px solid #5c6a60;
}

.tab {
  position: relative;
  display: flex;
  align-items: center;
  width: 152px;
  padding-left: 18px;
  border-left: 2px solid #5c6a60;
}

.tab-partial {
  width: 52px;
  padding-left: 0;
  border-left: 2px solid #3e4d43;
}

.tab-partial .tab-label {
  margin-left: 0;
  opacity: 0.6;
}

.fav {
  flex: none;
  width: 32px;
  height: 32px;
}

.tab-label {
  margin-left: 13px;
  white-space: nowrap;
  -webkit-mask-image: linear-gradient(to right, #000 55%, transparent);
  mask-image: linear-gradient(to right, #000 55%, transparent);
}

.tab-active {
  width: 150px;
  background-color: #f9f9f9;
  border-left: 0;
  border-top: 5px solid #0a84ff;
  color: #5b5b5f;
}

.tab-active .tab-label {
  margin-left: 11px;
  min-width: 28px;
}

.tab-close {
  margin-left: 13px;
}

.tab-after {
  border-left: 0;
}

.tab-end {
  display: flex;
  align-items: center;
  flex: 1;
  padding-left: 20px;
  border-left: 2px solid #5c6a60;
}

.tab-end svg:nth-child(2) {
  margin-left: 34px;
}

.tab-end svg:nth-child(3) {
  margin-left: 37px;
}

/* toolbar */
.navbar {
  display: flex;
  align-items: center;
  height: 75px;
  padding: 5px 0 0 7px;
  background-color: #f9f9f9;
}

.back-btn {
  display: flex;
  align-items: center;
  justify-content: center;
  flex: none;
  width: 66px;
  height: 66px;
  background-color: #fff;
  border: 2px solid #b8b8b8;
  border-radius: 50%;
}

.nav-forward {
  margin-left: 17px;
}

.nav-icon {
  margin-left: 32px;
}

.urlbar {
  display: flex;
  align-items: center;
  flex: none;
  width: 1442px;
  height: 59px;
  margin-left: 240px;
  padding-left: 19px;
  background-color: #fff;
  border: 2px solid #bfbfbf;
  border-radius: 6px;
  box-shadow: 0 1px 2px rgba(0, 0, 0, 0.15);
  font-size: 28px;
  white-space: nowrap;
}

.lock {
  margin-left: 16px;
}

.identity {
  margin-left: 13px;
  padding-right: 18px;
  color: #0b8a00;
  border-right: 2px solid #a6dda0;
  line-height: 42px;
}

.url {
  width: 778px;
  margin-left: 17px;
  color: #0c0c0d;
  -webkit-mask-image: linear-gradient(to right, #000 90%, transparent 99%);
  mask-image: linear-gradient(to right, #000 90%, transparent 99%);
}

.url-dim {
  color: #737373;
}

.url-dots {
  margin-left: 80px;
  color: #55555a;
  font-size: 20px;
  letter-spacing: 2px;
}

.pocket {
  margin-left: 24px;
}

.star {
  margin-left: 25px;
}

.nav-right {
  display: flex;
  align-items: center;
  gap: 32px;
  margin-left: 240px;
}

.smiley {
  position: relative;
  display: flex;
  justify-content: center;
  width: 32px;
}

.badge-off {
  position: absolute;
  left: 12px;
  top: -11px;
  width: 32px;
  height: 24px;
  background-color: #ff9400;
  color: #111;
  font-size: 19px;
  line-height: 22px;
  text-align: center;
}

.abp-text {
  fill: #fff;
  font-size: 12px;
  font-weight: bold;
}

.nav-divider {
  width: 2px;
  height: 67px;
  margin: 0 -10px 0 -8px;
  background-color: #e3e3e3;
}

/* bookmarks */
.bookmarks {
  display: flex;
  align-items: center;
  gap: 27px;
  height: 50px;
  padding: 2px 0 0 25px;
  background-color: #f9f9f9;
  border-bottom: 2px solid #e0e0e2;
  font-size: 23.500px;
  color: #0c0c0d;
  white-space: nowrap;
}

.bm {
  display: flex;
  align-items: center;
  gap: 12px;
}

.bm-apple {
  fill: #8c8c8c;
}

.bm-wide {
  gap: 9px;
  margin-left: -8px;
}

.bm-fox {
  margin-left: -3px;
}

.bm-mail {
  gap: 9px;
}

.bm-last {
  gap: 15px;
}

.vu-text {
  fill: #fff;
  font-size: 12px;
  font-weight: bold;
}

.vu-sub {
  fill: #fff;
  font-size: 8px;
}

/* page */
.page {
  position: relative;
  height: 1308px;
  padding: 9px 0 0 129px;
  background-color: #f0f2f6;
  border-radius: 0 0 10px 10px;
  font-family: "Open Sans", sans-serif;
  overflow: hidden;
}

.source,
.license {
  margin: 0;
  font-size: 25.900px;
  line-height: 45px;
  color: #727f88;
}

.license {
  color: #5f6b73;
}

.license b {
  color: #4a555c;
}

.license svg {
  margin-left: 8px;
  vertical-align: -1px;
}

.main {
  display: flex;
  align-items: flex-start;
  margin-top: 22px;
}

/* chart card */
.chart-card {
  flex: none;
  width: 1564px;
  height: 1119px;
  background-color: #fff;
  border: 2px solid #e6e9ec;
}

.chart-tabs {
  position: relative;
  display: flex;
  height: 92px;
  background-color: #fff;
}

.chart-tab {
  display: flex;
  align-items: center;
  height: 92px;
  padding-bottom: 8px;
  font-size: 28px;
  color: #7f99aa;
}

.tab-line {
  margin-left: 40px;
}

.tab-bar {
  margin-left: 80px;
}

.tab-map {
  width: 139px;
  justify-content: center;
  margin-left: 39px;
  color: #2ba6f5;
  font-weight: 600;
  border-bottom: 3px solid #2ba6f5;
}

.chart-actions {
  position: absolute;
  right: 17px;
  top: 16px;
  display: flex;
  gap: 14px;
}

.act-btn {
  display: flex;
  align-items: center;
  justify-content: center;
  gap: 14px;
  height: 61px;
  padding: 0 0 4px;
  background-color: #f0f2f5;
  border: 0;
  border-radius: 2px;
  font: 25px "Open Sans", sans-serif;
  color: #57626b;
}

.act-share {
  width: 140px;
}

.act-details {
  width: 160px;
}

.map {
  position: relative;
  height: 922px;
  background-color: #ededed;
  border-top: 6px solid #dfdfdf;
  overflow: hidden;
}

.map-svg {
  display: block;
  margin-left: -1px;
}

.map-svg path {
  stroke: rgba(70, 80, 90, 0.5);
  stroke-width: 2.400;
  stroke-linejoin: round;
  vector-effect: non-scaling-stroke;
}

.coast {
  filter: url(#coast);
}

.map-svg .blank path {
  fill: #fff;
  stroke: none;
}

.map-svg .blank-line path {
  fill: none;
  stroke: #dddddd;
}

.c0 {
  fill: #e6f4fb;
}

.c1 {
  fill: #cce8f7;
}

.c2 {
  fill: #b3dbff;
}

.c3 {
  fill: #a3b5cc;
}

.map-svg .lake {
  fill: #ededed;
}

.map-svg .blank-fill {
  fill: #e6f4fb;
}

.map-svg .dot {
  fill: #888;
}

.zoom-ctl {
  position: absolute;
  left: 19px;
  top: 16px;
  width: 52px;
  height: 106px;
  border-radius: 4px;
  box-shadow: 0 3px 8px rgba(0, 0, 0, 0.25);
  overflow: hidden;
}

.zoom-in {
  height: 52px;
  background-color: #fff;
  border-bottom: 2px solid #e4e7ea;
  font: bold 38px/58px "Liberation Sans", sans-serif;
  color: #000;
  text-align: center;
}

.zoom-out {
  display: flex;
  align-items: center;
  justify-content: center;
  height: 54px;
  padding-top: 4px;
  background-color: #f4f4f4;
}

.zoom-out span {
  width: 17px;
  height: 4px;
  background-color: #b5b5b5;
}

.mode-ctl {
  position: absolute;
  left: 99px;
  top: 16px;
  display: flex;
  align-items: center;
  width: 311px;
  height: 52px;
  padding-left: 19px;
  background-color: #fff;
  border-radius: 4px;
  box-shadow: 0 3px 8px rgba(0, 0, 0, 0.25);
  font-size: 27px;
}

.mode-on {
  margin-left: 8px;
  color: #222d33;
}

.mode-sep {
  width: 2px;
  height: 36px;
  margin-left: 12px;
  background-color: #e3e6e8;
}

.mode-dot {
  width: 26px;
  height: 26px;
  margin-left: 11px;
  background-color: #888;
  border: 7px solid #e0e0e0;
  border-radius: 50%;
}

.mode-off {
  margin-left: 11px;
  color: #777;
}

.map-tip {
  position: absolute;
  left: 853px;
  top: 190px;
  width: 480px;
  height: 57px;
  padding-left: 22px;
  background-color: #fff;
  border-radius: 4px;
  box-shadow: 0 5px 30px rgba(0, 0, 0, 0.35);
  font: 24px/58px "Liberation Sans", sans-serif;
  color: #111;
}

.map-tip b {
  letter-spacing: -0.2px;
}

.tip-caret {
  position: absolute;
  left: 200px;
  top: 57px;
  width: 80px;
  height: 40px;
  overflow: hidden;
}

.tip-caret::after {
  content: "";
  position: absolute;
  left: 22px;
  top: -18px;
  width: 36px;
  height: 36px;
  background-color: #fff;
  transform: rotate(45deg);
  box-shadow: 0 0 24px rgba(0, 0, 0, 0.3);
}

.legend {
  position: absolute;
  left: 1346px;
  top: 620px;
  display: flex;
  flex-direction: column;
  gap: 2px;
  width: 196px;
  height: 276px;
  background-color: #eeeeee;
  border-top: 2px solid #eee;
  box-shadow: 0 2px 8px rgba(0, 0, 0, 0.2);
  font: 24px "Liberation Sans", sans-serif;
  color: #111;
}

.legend-head {
  display: flex;
  align-items: center;
  height: 44px;
  padding-left: 20px;
  background-color: #fff;
}

.legend-row {
  display: flex;
  align-items: center;
  height: 44px;
  padding-left: 20px;
  background-color: #fff;
}

.swatch {
  width: 20px;
  height: 20px;
  margin-right: 20px;
}

.s1 {
  background-color: #cfeafa;
}

.s2 {
  background-color: #d2eafb;
}

.s3 {
  background-color: #a2d3f0;
}

.s4 {
  background-color: #6bb8f8;
}

.s5 {
  background-color: #4d6f9c;
}

.timeline {
  display: flex;
  height: 103px;
  background-color: #f7f9fa;
  border-top: 2px solid #e3e7e8;
}

.year {
  width: 342px;
  border-right: 2px solid #e6e9ec;
  font-size: 27px;
  font-weight: 700;
  line-height: 98px;
  color: #4e5a60;
  text-align: center;
}

.slider {
  position: relative;
  flex: 1;
}

.track {
  position: absolute;
  left: 40px;
  top: 43px;
  width: 1098px;
  height: 8px;
  background-color: #d8dde3;
  border-radius: 4px;
}

.handle {
  position: absolute;
  left: 1137px;
  top: 26px;
  display: flex;
  align-items: center;
  justify-content: center;
  width: 46px;
  height: 46px;
  background-color: #fbfcfc;
  border: 2px solid #d5dde0;
  border-radius: 50%;
}

.handle span {
  width: 11px;
  height: 16px;
  border-left: 1px solid #c5cdd2;
  border-right: 1px solid #c5cdd2;
  background: linear-gradient(#c5cdd2, #c5cdd2) center / 1px 100% no-repeat;
}

/* right column */
.side {
  flex: none;
  width: 695px;
  margin-left: 43px;
}

.related {
  display: flex;
  flex-direction: column;
  gap: 2px;
  margin: -1px 0 0 3px;
  padding: 0;
  list-style: none;
}

.related li {
  position: relative;
  display: flex;
  align-items: center;
  height: 87px;
  padding: 0 110px 3px 20px;
  background-color: #e3e5e9;
  font-size: 26px;
  line-height: 31px;
  color: #58636b;
}

.spin {
  position: absolute;
  right: 35px;
  top: 23px;
  width: 40px;
  height: 40px;
  border: 4px solid #ced1d4;
  border-top-color: #8d9093;
  border-radius: 50%;
}

.tools {
  margin-top: 20px;
  border: 2px solid #e8ebee;
  border-radius: 2px;
}

.tool {
  display: flex;
  height: 130px;
  background-color: #fff;
}

.tool + .tool {
  height: 132px;
  border-top: 2px solid #e8ebee;
}

.tool-icon {
  position: relative;
  flex: none;
  width: 95px;
  height: 95px;
  margin: 17px 35px 0 29px;
  border: 2px solid #e3e8ec;
  border-radius: 50%;
}

.tool-ext {
  position: absolute;
  left: 74px;
  top: 6px;
  width: 19px;
  height: 19px;
}

.tool h3 {
  margin: 21px 0 0;
  font-size: 32px;
  font-weight: 600;
  line-height: 42px;
  color: #4a555c;
}

.tool p {
  margin: 5px 0 0;
  font-size: 26px;
  line-height: 36px;
  color: #7d8990;
}

.tool a {
  margin-right: 30px;
  color: #2ba6f5;
  text-decoration: underline;
}

.dock-glow {
  position: absolute;
  left: 560px;
  bottom: 0;
  width: 1500px;
  height: 70px;
  background: linear-gradient(to top, rgba(0, 0, 0, 0.07), transparent);
  -webkit-mask-image: linear-gradient(to right, transparent, #000 12%, #000 80%, transparent);
  mask-image: linear-gradient(to right, transparent, #000 12%, #000 80%, transparent);
}

.help {
  position: absolute;
  left: 2240px;
  top: 1227px;
  display: flex;
  align-items: center;
  gap: 31px;
  width: 300px;
  height: 60px;
  padding: 0 0 2px 18px;
  background-color: rgba(46, 170, 245, 0.96);
  border-radius: 3px;
  font-size: 23.500px;
  font-weight: 600;
  color: #fff;
}

/* dock */
.desktop {
  height: 55px;
}

.dock {
  display: flex;
  width: 1240px;
  height: 56px;
  margin-left: 660px;
  padding: 5px 0 0 1px;
  background-color: #5a5e5e;
  border-radius: 8px 8px 0 0;
}

.dock-item {
  position: relative;
  display: flex;
  justify-content: center;
  width: 42.100px;
}

.dock-item svg {
  width: 34px;
  height: 36px;
}

.running::after {
  content: "";
  position: absolute;
  left: 19px;
  top: 41px;
  width: 4px;
  height: 5px;
  background-color: #000;
  border-radius: 50%;
}

.dock-sep {
  width: 1px;
  height: 41px;
  margin: 0 7px;
  background-color: #33373a;
}

.dock-cal {
  font-size: 15px;
  fill: #222;
}

.dock-w {
  font-size: 15px;
  fill: #fff;
}

.fav-cb-text {
  font-size: 15px;
  font-weight: bold;
  fill: #fff;
}
```
